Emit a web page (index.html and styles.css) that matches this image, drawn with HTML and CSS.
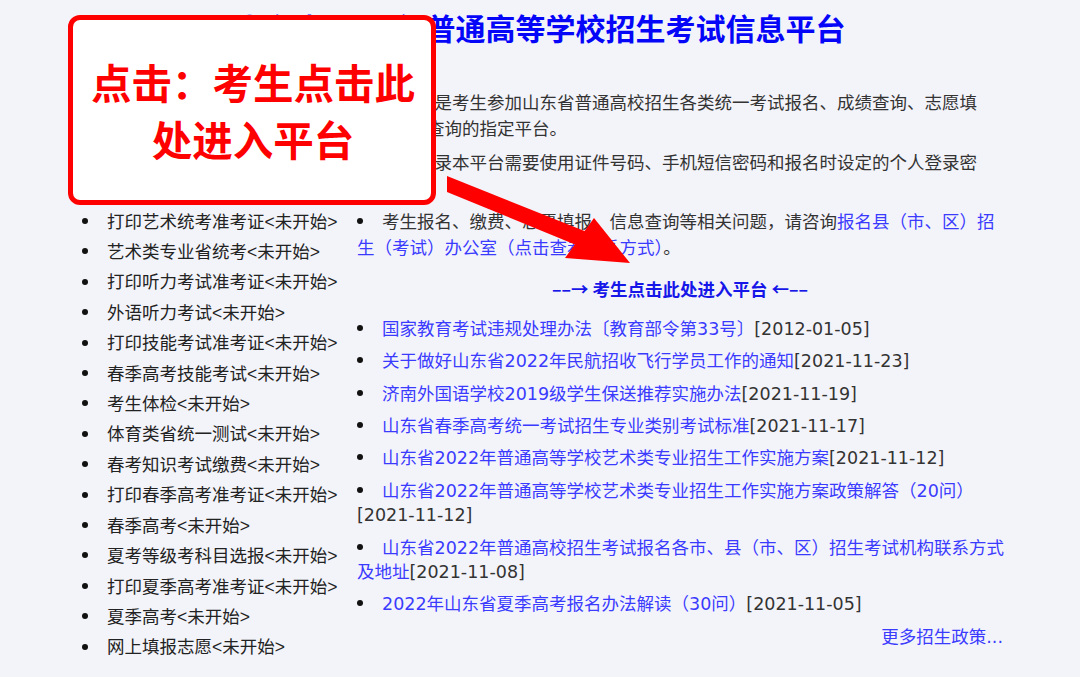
FILE: index.html
```html
<!DOCTYPE html>
<html lang="zh-CN">
<head>
<meta charset="utf-8">
<title>山东省普通高等学校招生考试信息平台</title>
<link rel="stylesheet" href="styles.css">
</head>
<body>
<div class="page">
  <header class="header">
    <h1 class="title">山东省2022年普通高等学校招生考试信息平台</h1>
  </header>

  <div class="main">
    <ul class="side">
      <li>考生网上报名&lt;未开始&gt;</li>
      <li>网上缴费&lt;未开始&gt;</li>
      <li>报名信息确认&lt;未开始&gt;</li>
      <li>艺术类专业报名&lt;未开始&gt;</li>
      <li>打印艺术统考准考证&lt;未开始&gt;</li>
      <li>艺术类专业省统考&lt;未开始&gt;</li>
      <li>打印听力考试准考证&lt;未开始&gt;</li>
      <li>外语听力考试&lt;未开始&gt;</li>
      <li>打印技能考试准考证&lt;未开始&gt;</li>
      <li>春季高考技能考试&lt;未开始&gt;</li>
      <li>考生体检&lt;未开始&gt;</li>
      <li>体育类省统一测试&lt;未开始&gt;</li>
      <li>春考知识考试缴费&lt;未开始&gt;</li>
      <li>打印春季高考准考证&lt;未开始&gt;</li>
      <li>春季高考&lt;未开始&gt;</li>
      <li>夏考等级考科目选报&lt;未开始&gt;</li>
      <li>打印夏季高考准考证&lt;未开始&gt;</li>
      <li>夏季高考&lt;未开始&gt;</li>
      <li>网上填报志愿&lt;未开始&gt;</li>
    </ul>

    <div class="content">
      <ul class="notes">
        <li>本平台是考生参加山东省普通高校招生各类统一考试报名、成绩查询、志愿填报、录取查询的指定平台。</li>
        <li>考生登录本平台需要使用证件号码、手机短信密码和报名时设定的个人登录密码。</li>
        <li>考生报名、缴费、志愿填报、信息查询等相关问题，请咨询<a class="link" href="#">报名县（市、区）招生（考试）办公室（点击查看联系方式）</a>。</li>
      </ul>

      <p class="enter"><a class="enter-link" href="#">––→ 考生点击此处进入平台 ←––</a></p>

      <ul class="news">
        <li><a class="link" href="#">国家教育考试违规处理办法〔教育部令第33号〕</a><span class="date">[2012-01-05]</span></li>
        <li><a class="link" href="#">关于做好山东省2022年民航招收飞行学员工作的通知</a><span class="date">[2021-11-23]</span></li>
        <li><a class="link" href="#">济南外国语学校2019级学生保送推荐实施办法</a><span class="date">[2021-11-19]</span></li>
        <li><a class="link" href="#">山东省春季高考统一考试招生专业类别考试标准</a><span class="date">[2021-11-17]</span></li>
        <li><a class="link" href="#">山东省2022年普通高等学校艺术类专业招生工作实施方案</a><span class="date">[2021-11-12]</span></li>
        <li><a class="link" href="#">山东省2022年普通高等学校艺术类专业招生工作实施方案政策解答（20问）</a><span class="date">[2021-11-12]</span></li>
        <li><a class="link" href="#">山东省2022年普通高校招生考试报名各市、县（市、区）招生考试机构联系方式及地址</a><span class="date">[2021-11-08]</span></li>
        <li><a class="link" href="#">2022年山东省夏季高考报名办法解读（30问）</a><span class="date">[2021-11-05]</span></li>
      </ul>
      <p class="more"><a class="link" href="#">更多招生政策...</a></p>
    </div>
  </div>

  <div class="callout">
    <p class="callout-text">点击：考生点击此<br>处进入平台</p>
  </div>

  <svg class="arrow" width="1080" height="677" viewBox="0 0 1080 677" aria-hidden="true">
    <polygon points="447,176 447,192 581,247 587,232" fill="#ff0000"/>
    <polygon points="594,218 630,263 565,258" fill="#ff0000"/>
  </svg>
</div>
</body>
</html>
```

FILE: styles.css
```css
* { box-sizing: border-box; }

html, body {
  margin: 0;
  padding: 0;
  background: #f3f4f9;
}

body {
  font-family: "DejaVu Sans", "Noto Sans CJK SC", sans-serif;
  color: #333;
}

.page {
  position: relative;
  width: 1080px;
  height: 677px;
  overflow: hidden;
}

.header {
  padding-top: 6px;
}

.title {
  margin: 0;
  text-align: center;
  font-family: "Noto Sans CJK SC", sans-serif;
  font-weight: 700;
  font-size: 30px;
  line-height: 42px;
  color: #0505f8;
}

.main {
  display: flex;
  padding-left: 82px;
  margin-top: 37px;
}

.side {
  list-style: none;
  margin: 0;
  padding: 0;
  width: 275px;
  flex: none;
  font-family: "Liberation Sans", "Noto Sans CJK SC", sans-serif;
  font-size: 17.5px;
  line-height: 30.4px;
  color: #222;
}

.side li::before,
.notes li::before,
.news li::before {
  content: "";
  display: inline-block;
  width: 6px;
  height: 6px;
  border-radius: 50%;
  background: #111;
  vertical-align: middle;
  margin-right: 19px;
  position: relative;
  top: -2px;
}

.content {
  width: 652px;
  flex: none;
  padding-top: 5px;
  font-size: 17.5px;
}

.notes {
  list-style: none;
  margin: 0;
  padding: 0;
  line-height: 26px;
}

.notes li {
  margin-bottom: 7.5px;
}

.notes li:last-child {
  margin-bottom: 0;
}

.link {
  color: #3b3bff;
  text-decoration: none;
}

.enter {
  margin: 15px 6px 0 0;
  text-align: center;
  line-height: 26px;
}

.enter-link {
  color: #1616e8;
  font-weight: 700;
  text-decoration: none;
  font-family: "Noto Sans CJK SC", sans-serif;
}

.news {
  list-style: none;
  margin: 13.75px 0 0;
  padding: 0;
  line-height: 24.5px;
}

.news li {
  margin-bottom: 7.9px;
}

.date {
  color: #333;
  white-space: nowrap;
}

.more {
  margin: 2px 0 0;
  padding-right: 6px;
  text-align: right;
  line-height: 24.5px;
}

.callout {
  position: absolute;
  left: 68px;
  top: 15px;
  width: 368px;
  height: 190px;
  background: #fff;
  border: 5px solid #ff0000;
  border-radius: 12px;
  display: flex;
  align-items: center;
  justify-content: center;
}

.callout-text {
  margin: 0 0 0 2px;
  text-align: center;
  font-family: "Noto Sans CJK SC", sans-serif;
  font-weight: 700;
  font-size: 40.5px;
  line-height: 57px;
  color: #ff0000;
}

.arrow {
  position: absolute;
  left: 0;
  top: 0;
  pointer-events: none;
}
```
